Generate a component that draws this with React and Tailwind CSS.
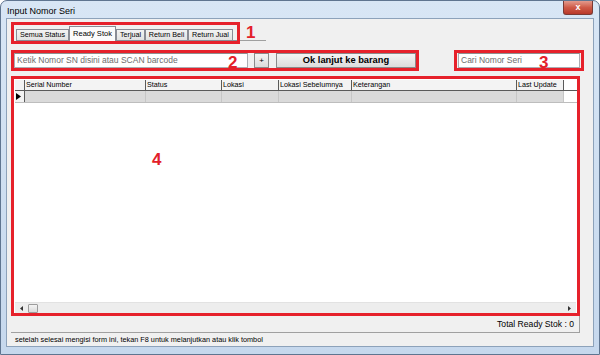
const cols = [
  { label: 'Serial Number', w: 'w-[121px]' },
  { label: 'Status', w: 'w-[76px]' },
  { label: 'Lokasi', w: 'w-[57px]' },
  { label: 'Lokasi Sebelumnya', w: 'w-[73px]' },
  { label: 'Keterangan', w: 'w-[165px]' },
  { label: 'Last Update', w: 'w-[47px]' },
];

const tabs = [
  { label: 'Semua Status', w: 'w-[53px]' },
  { label: 'Ready Stok', w: 'w-[47px]', active: true },
  { label: 'Terjual', w: 'w-[29px]' },
  { label: 'Return Beli', w: 'w-[43px]' },
  { label: 'Return Jual', w: 'w-[45px]' },
];

function Mark({ children, className = '' }) {
  return (
    <span className={`text-[17px] leading-none font-bold text-[#e3202a] ${className}`}>{children}</span>
  );
}

export default function App() {
  return (
    <div className="w-[600px] h-[355px] bg-linear-to-b from-[#d8e6f5] to-[#c6d8ed] border border-[#5f7590] rounded-t-[7px] flex flex-col font-['Liberation_Sans',Arial,sans-serif] text-black overflow-hidden">
      {/* Title bar */}
      <div className="h-[17px] flex items-start justify-between shrink-0">
        <div className="pl-[6px] pt-[6px] text-[9px] leading-none">Input Nomor Seri</div>
        <div className="mr-[6px] w-[30px] h-[14px] rounded-b-[3px] border border-t-0 border-[#7a3a34] bg-linear-to-b from-[#e29a8c] via-[#cf5a47] to-[#b8382a] flex items-center justify-center">
          <span className="text-white text-[9px] font-bold leading-none">x</span>
        </div>
      </div>

      {/* Client area */}
      <div className="flex-1 mx-[5px] mb-[7px] bg-[#f0f0f0] border border-[#8da2ba] flex flex-col pl-[4px]">
        {/* Row 1: tabs */}
        <div className="mt-[3px] flex items-start">
          <div className="w-[229px] h-[22px] border-[3px] border-[#e6212b] flex items-end pl-[2px]">
            <div className="flex items-end h-full border-b border-[#898c95] w-full">
              {tabs.map((t) =>
                t.active ? (
                  <div
                    key={t.label}
                    className={`${t.w} h-[15px] -mb-[1px] bg-[#fbfbfb] border border-b-0 border-[#898c95] text-[7.5px] leading-none flex items-center justify-center`}
                  >
                    {t.label}
                  </div>
                ) : (
                  <div
                    key={t.label}
                    className={`${t.w} h-[11px] bg-linear-to-b from-[#f3f3f3] to-[#e2e2e2] border border-b-0 border-[#898c95] text-[7.2px] leading-none flex items-center justify-center`}
                  >
                    {t.label}
                  </div>
                ),
              )}
            </div>
          </div>
          <div className="w-[26px] h-[19px] border-b border-[#a0a0a0] flex items-end pl-[6px]">
            <Mark className="-mb-[1px]">1</Mark>
          </div>
        </div>

        {/* Row 2: scan input + search */}
        <div className="mt-[6px] flex items-start">
          <div className="w-[408px] h-[21px] border-[3px] border-[#e6212b] flex items-center">
            <div className="relative w-[234px] h-[15px] bg-white border border-[#abadb3] border-t-[#8e8f8f] flex items-center pl-[2px]">
              <span className="text-[8.5px] leading-none text-[#6d6d6d]">Ketik Nomor SN disini atau SCAN barcode</span>
              <Mark className="absolute left-[213px] top-[0px]">2</Mark>
            </div>
            <div className="ml-[6px] w-[15px] h-[15px] border border-[#8a8a8a] bg-linear-to-b from-[#f4f4f4] to-[#dcdcdc] flex items-center justify-center text-[8px] leading-none">
              +
            </div>
            <div className="ml-[7px] w-[140px] h-[15px] border border-[#8a8a8a] bg-linear-to-b from-[#f4f4f4] to-[#dcdcdc] flex items-center justify-center text-[9.3px] font-bold leading-none">
              Ok lanjut ke barang
            </div>
          </div>
          <div className="ml-[35px] w-[130px] h-[21px] border-[3px] border-[#e6212b] flex items-center px-[1px]">
            <div className="relative flex-1 h-[15px] bg-white border border-[#abadb3] border-t-[#8e8f8f] flex items-center pl-[2px]">
              <span className="text-[8.5px] leading-none text-[#6d6d6d]">Cari Nomor Seri</span>
              <Mark className="absolute left-[80px] top-[0px]">3</Mark>
            </div>
          </div>
        </div>

        {/* Row 3: grid */}
        <div className="mt-[5px] w-[569px] h-[240px] border-[3px] border-[#e6212b] bg-white flex flex-col relative">
          <div className="pl-[1px] pt-[1px] flex-1">
            <div className="flex h-[11px] border-b border-[#5a5a5a]">
              <div className="w-[10px] bg-[#f3f3f3] border-r border-[#5a5a5a]" />
              {cols.map((c) => (
                <div
                  key={c.label}
                  className={`${c.w} bg-[#f3f3f3] border-r border-[#5a5a5a] text-[7.2px] leading-none flex items-center pl-[1px] whitespace-nowrap overflow-hidden`}
                >
                  {c.label}
                </div>
              ))}
            </div>
            <div className="flex h-[12px] border-b border-[#bdbdbd]">
              <div className="w-[10px] bg-[#f3f3f3] border-r border-[#5a5a5a] flex items-center pl-[1px]">
                <svg width="5" height="7" viewBox="0 0 5 7">
                  <path d="M0 0 L5 3.5 L0 7 Z" fill="#000" />
                </svg>
              </div>
              {cols.map((c) => (
                <div key={c.label} className={`${c.w} bg-[#dadada] border-r border-[#c6c6c6]`} />
              ))}
            </div>
          </div>
          <Mark className="absolute left-[138px] top-[72px]">4</Mark>
          {/* horizontal scrollbar */}
          <div className="h-[11px] mx-[1px] bg-[#ededed] border-t border-[#e2e2e2] flex items-center">
            <div className="w-[13px] flex items-center justify-center">
              <svg width="3" height="5" viewBox="0 0 3 5">
                <path d="M3 0 L0 2.5 L3 5 Z" fill="#333" />
              </svg>
            </div>
            <div className="w-[10px] h-[9px] rounded-[1px] border border-[#9c9c9c] bg-linear-to-b from-[#f4f4f4] to-[#dadada]" />
            <div className="flex-1" />
            <div className="w-[13px] flex items-center justify-center">
              <svg width="3" height="5" viewBox="0 0 3 5">
                <path d="M0 0 L3 2.5 L0 5 Z" fill="#333" />
              </svg>
            </div>
          </div>
        </div>

        {/* Status panel */}
        <div className="w-[569px] h-[17px] border-b border-r border-[#a0a0a0] flex items-center justify-end pr-[5px]">
          <span className="text-[8.6px] leading-none">Total Ready Stok : 0</span>
        </div>

        {/* Hint */}
        <div className="flex-1 flex items-center pl-[4px]">
          <span className="text-[7.3px] leading-none">setelah selesai mengisi form ini, tekan F8 untuk melanjutkan atau klik tombol</span>
        </div>
      </div>
    </div>
  );
}
